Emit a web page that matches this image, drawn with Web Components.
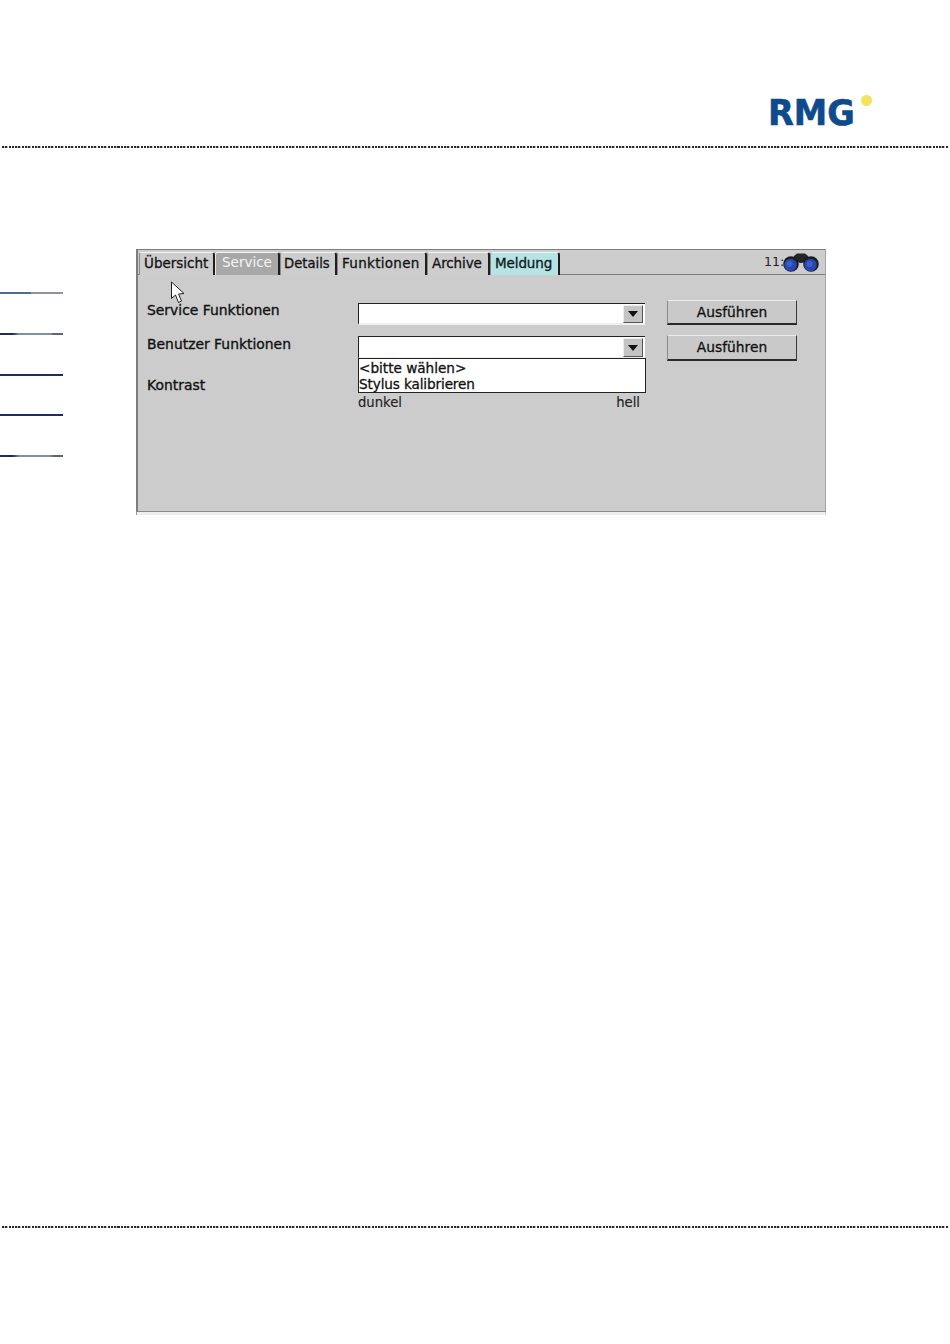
<!DOCTYPE html>
<html lang="de"><head><meta charset="utf-8"><title>Service</title>
<style>
html,body{margin:0;padding:0;background:#fff}
body{font-family:"DejaVu Sans",sans-serif;width:950px;height:1344px;overflow:hidden}
</style></head><body>
<manual-page>
  <rmg-header slot="header"></rmg-header>
  <side-rules slot="side"></side-rules>
  <hmi-window slot="main">
    <hmi-tab slot="tabs" style="--w:76px">Übersicht</hmi-tab>
    <hmi-tab slot="tabs" style="--w:65px" active>Service</hmi-tab>
    <hmi-tab slot="tabs" style="--w:57px;font-size:13.2px;padding-left:3px">Details</hmi-tab>
    <hmi-tab slot="tabs" style="--w:90px;letter-spacing:.3px;padding-left:4px">Funktionen</hmi-tab>
    <hmi-tab slot="tabs" style="--w:63px;padding-left:4px;letter-spacing:-.1px">Archive</hmi-tab>
    <hmi-tab slot="tabs" style="--w:70px;padding-left:4px;letter-spacing:-.1px" alert>Meldung</hmi-tab>
    <hmi-label style="--top:27px">Service Funktionen</hmi-label>
    <hmi-combo style="--top:28px;--h:22px"></hmi-combo>
    <hmi-button style="--top:25px;--h:25px">Ausführen</hmi-button>
    <hmi-label style="--top:11px">Benutzer Funktionen</hmi-label>
    <hmi-combo style="--top:11px;--h:23px"><span>&lt;bitte wählen&gt;</span><span style="letter-spacing:-.12px">Stylus kalibrieren</span></hmi-combo>
    <hmi-button style="--top:10px;--h:26px;padding-bottom:1px">Ausführen</hmi-button>
    <hmi-label style="--top:16px">Kontrast</hmi-label>
    <hmi-scale><span>dunkel</span><span>hell</span></hmi-scale>
  </hmi-window>
  <dotted-rule slot="footer"></dotted-rule>
</manual-page>
<script>
function def(name, html){
  customElements.define(name, class extends HTMLElement{
    constructor(){super();this.attachShadow({mode:'open'}).innerHTML=html;}
    connectedCallback(){
      if(name==='hmi-combo' && this.querySelector('span')) this.shadowRoot.querySelector('.wrap').classList.add('has');
    }
  });
}
def('manual-page',`<style>
:host{display:block;width:950px;height:1344px;position:relative}
.mid{display:flex;margin-top:101px;height:266px}
.side{width:136px;flex:none}
.main{width:690px;flex:none;position:relative}
.foot{margin-top:711px}
</style>
<slot name="header"></slot>
<div class="mid"><div class="side"><slot name="side"></slot></div><div class="main"><slot name="main"></slot></div></div>
<div class="foot"><slot name="footer"></slot></div>`);

def('dotted-rule',`<style>
:host{display:block;height:2px;margin:0 2px;
background:repeating-linear-gradient(90deg,#2a2a2a 0 2px,#bdbdbd 2px 2.6px,transparent 2.6px 3.3px)}
</style>`);

def('rmg-header',`<style>
:host{display:block;height:148px}
.top{height:146px;display:flex;justify-content:flex-end;align-items:flex-start;padding-right:78px;box-sizing:border-box}
.logo{display:flex;align-items:flex-start;padding-top:94px}
.rmg{font:700 35px/38px "DejaVu Sans",sans-serif;color:#0f4a8c;-webkit-text-stroke:.6px #0f4a8c;display:inline-block;width:94px;height:38px;transform-origin:0 50%;transform:scaleX(.96)}
.dot{width:11px;height:11px;border-radius:50%;background:#f4e260;margin:1px 0 0 -1px;flex:none}
</style>
<div class="top"><div class="logo"><span class="rmg">RMG</span><span class="dot"></span></div></div>
<dotted-rule></dotted-rule>`);

def('side-rules',`<style>
:host{display:flex;flex-direction:column;width:63px;padding-top:43px;gap:38.75px}
i{display:block;height:2px;background:#1f2d5e}
i.a{background:linear-gradient(90deg,#4f6a96 0 50%,#8996a6 50% 100%)}
i.b{background:linear-gradient(90deg,#1f2d5e 0 20%,#7f8da5 30% 80%,#5c6675 85% 100%)}
</style><i class="a"></i><i class="b"></i><i></i><i></i><i class="b"></i>`);

def('hmi-window',`<style>
:host{display:block;width:690px;height:266px;box-sizing:border-box;position:relative;background:#fff;
font:13.2px/16px "DejaVu Sans",sans-serif;color:#111}
.frame{height:263px;box-sizing:border-box;border:solid #7d7d7d;border-width:1px 1px 1px 2px;border-right-color:#a4a4a4;border-bottom-color:#8a8a8a;background:#cccccc;display:flex;flex-direction:column}
.bar{height:25px;flex:none;box-sizing:border-box;border-bottom:1px solid #7c7c7c;background:#cdcdcd;display:flex;padding:2px 0 0 1px;position:relative}
.time{position:absolute;left:626px;top:4px;font-size:12.5px;color:#222}
.bino{position:absolute;left:643px;top:0}
.panel{flex:1;display:grid;grid-template-columns:211px 287px 152px;grid-template-rows:max-content max-content max-content;justify-content:start;padding-left:9px;position:relative}
.edge{height:3px;background:#eeeeee;border-left:1px solid #9a9a9a;border-right:1px solid #cfcfcf}
.pointer{position:absolute;left:34px;top:32px}
::slotted(hmi-button){margin-left:22px}
</style>
<div class="frame">
  <div class="bar"><slot name="tabs"></slot><span class="time">11:</span>
    <svg class="bino" width="40" height="23" viewBox="0 0 40 23">
      <path d="M13 6 L16 3.5 L24 3.5 L27 6 L28 10 L21 13 L19 13 L12 10Z" fill="#262626"/>
      <circle cx="10" cy="14" r="7.8" fill="#1c1c1c"/>
      <circle cx="9.5" cy="15" r="6.2" fill="#2748b4"/><circle cx="8.5" cy="14" r="3" fill="#3f5fc8"/>
      <circle cx="30" cy="14" r="7.8" fill="#1c1c1c"/>
      <circle cx="29.5" cy="15" r="6.2" fill="#2748b4"/><circle cx="28.5" cy="14" r="3" fill="#3f5fc8"/>
    </svg>
  </div>
  <div class="panel"><slot></slot></div>
</div>
<div class="edge"></div>
<svg class="pointer" width="16" height="24" viewBox="0 0 16 24"><path d="M1.5 1 V17.5 L5.5 14 L8.5 21.5 L11.5 20 L8.5 13 L14 12.5 Z" fill="#fff" stroke="#222" stroke-width="1"/></svg>`);

def('hmi-tab',`<style>
:host{display:block;width:var(--w);height:23px;box-sizing:border-box;flex:none;
border:1px solid #f4f4f4;border-right:2px solid #1e1e1e;border-left-color:#8a8a8a;border-bottom:0;border-radius:3px 3px 0 0;
padding:2px 0 0 4px;white-space:nowrap;font:13.5px/17px "DejaVu Sans",sans-serif;color:#141414;background:#cdcdcd;-webkit-text-stroke:.3px #141414}
:host([active]){background:#a8a8a8;color:#f4f4f4;-webkit-text-stroke:0;padding-left:6px;padding-top:1px;border-left-color:#e8e8e8}
:host([alert]){background:#b6e3e3;color:#07202a}
</style><slot></slot>`);

def('hmi-label',`<style>
:host{display:block;margin-top:var(--top);font:13.9px/16px "DejaVu Sans",sans-serif;color:#111;white-space:nowrap;-webkit-text-stroke:.35px #111}
</style><slot></slot>`);

def('hmi-combo',`<style>
:host{display:block;margin-top:var(--top);height:var(--h);box-sizing:border-box;position:relative;background:#fff;
border-top:1px solid #222;border-left:1px solid #222;border-bottom:2px solid #efefef;z-index:2}
.btn{position:absolute;right:2px;top:1px;bottom:0;width:20px;box-sizing:border-box;background:#c4c4c4;border:1px solid;border-color:#ededed #555 #555 #ededed;display:flex;align-items:center;justify-content:center}
.btn::after{content:"";border:5px solid transparent;border-top:6px solid #111;border-bottom:0}
.list{position:absolute;left:-1px;width:288px;top:100%;margin-top:1px;box-sizing:border-box;background:#fff;border:1px solid #222;padding-top:1px;font:13.6px/16px "DejaVu Sans",sans-serif;color:#111;-webkit-text-stroke:.3px #111;display:none;flex-direction:column;height:35px}
.has .list{display:flex}
::slotted(span){display:block;padding-left:0}
</style><div class="wrap"><div class="btn"></div><div class="list"><slot></slot></div></div>`);

def('hmi-button',`<style>
:host{display:flex;align-items:center;justify-content:center;margin-top:var(--top);height:var(--h);width:130px;box-sizing:border-box;
background:#c9c9c9;border:1px solid;border-color:#ececec #3a3a3a #2a2a2a #8c8c8c;border-bottom-width:2px;
font:13.8px/16px "DejaVu Sans",sans-serif;color:#111;-webkit-text-stroke:.3px #111}
</style><slot></slot>`);

def('hmi-scale',`<style>
:host{display:flex;justify-content:space-between;width:282px;margin-top:34px;align-self:start;
font:13.2px/16px "DejaVu Sans",sans-serif;color:#222;-webkit-text-stroke:.15px #222}
</style><slot></slot>`);
</script>
</body></html>
